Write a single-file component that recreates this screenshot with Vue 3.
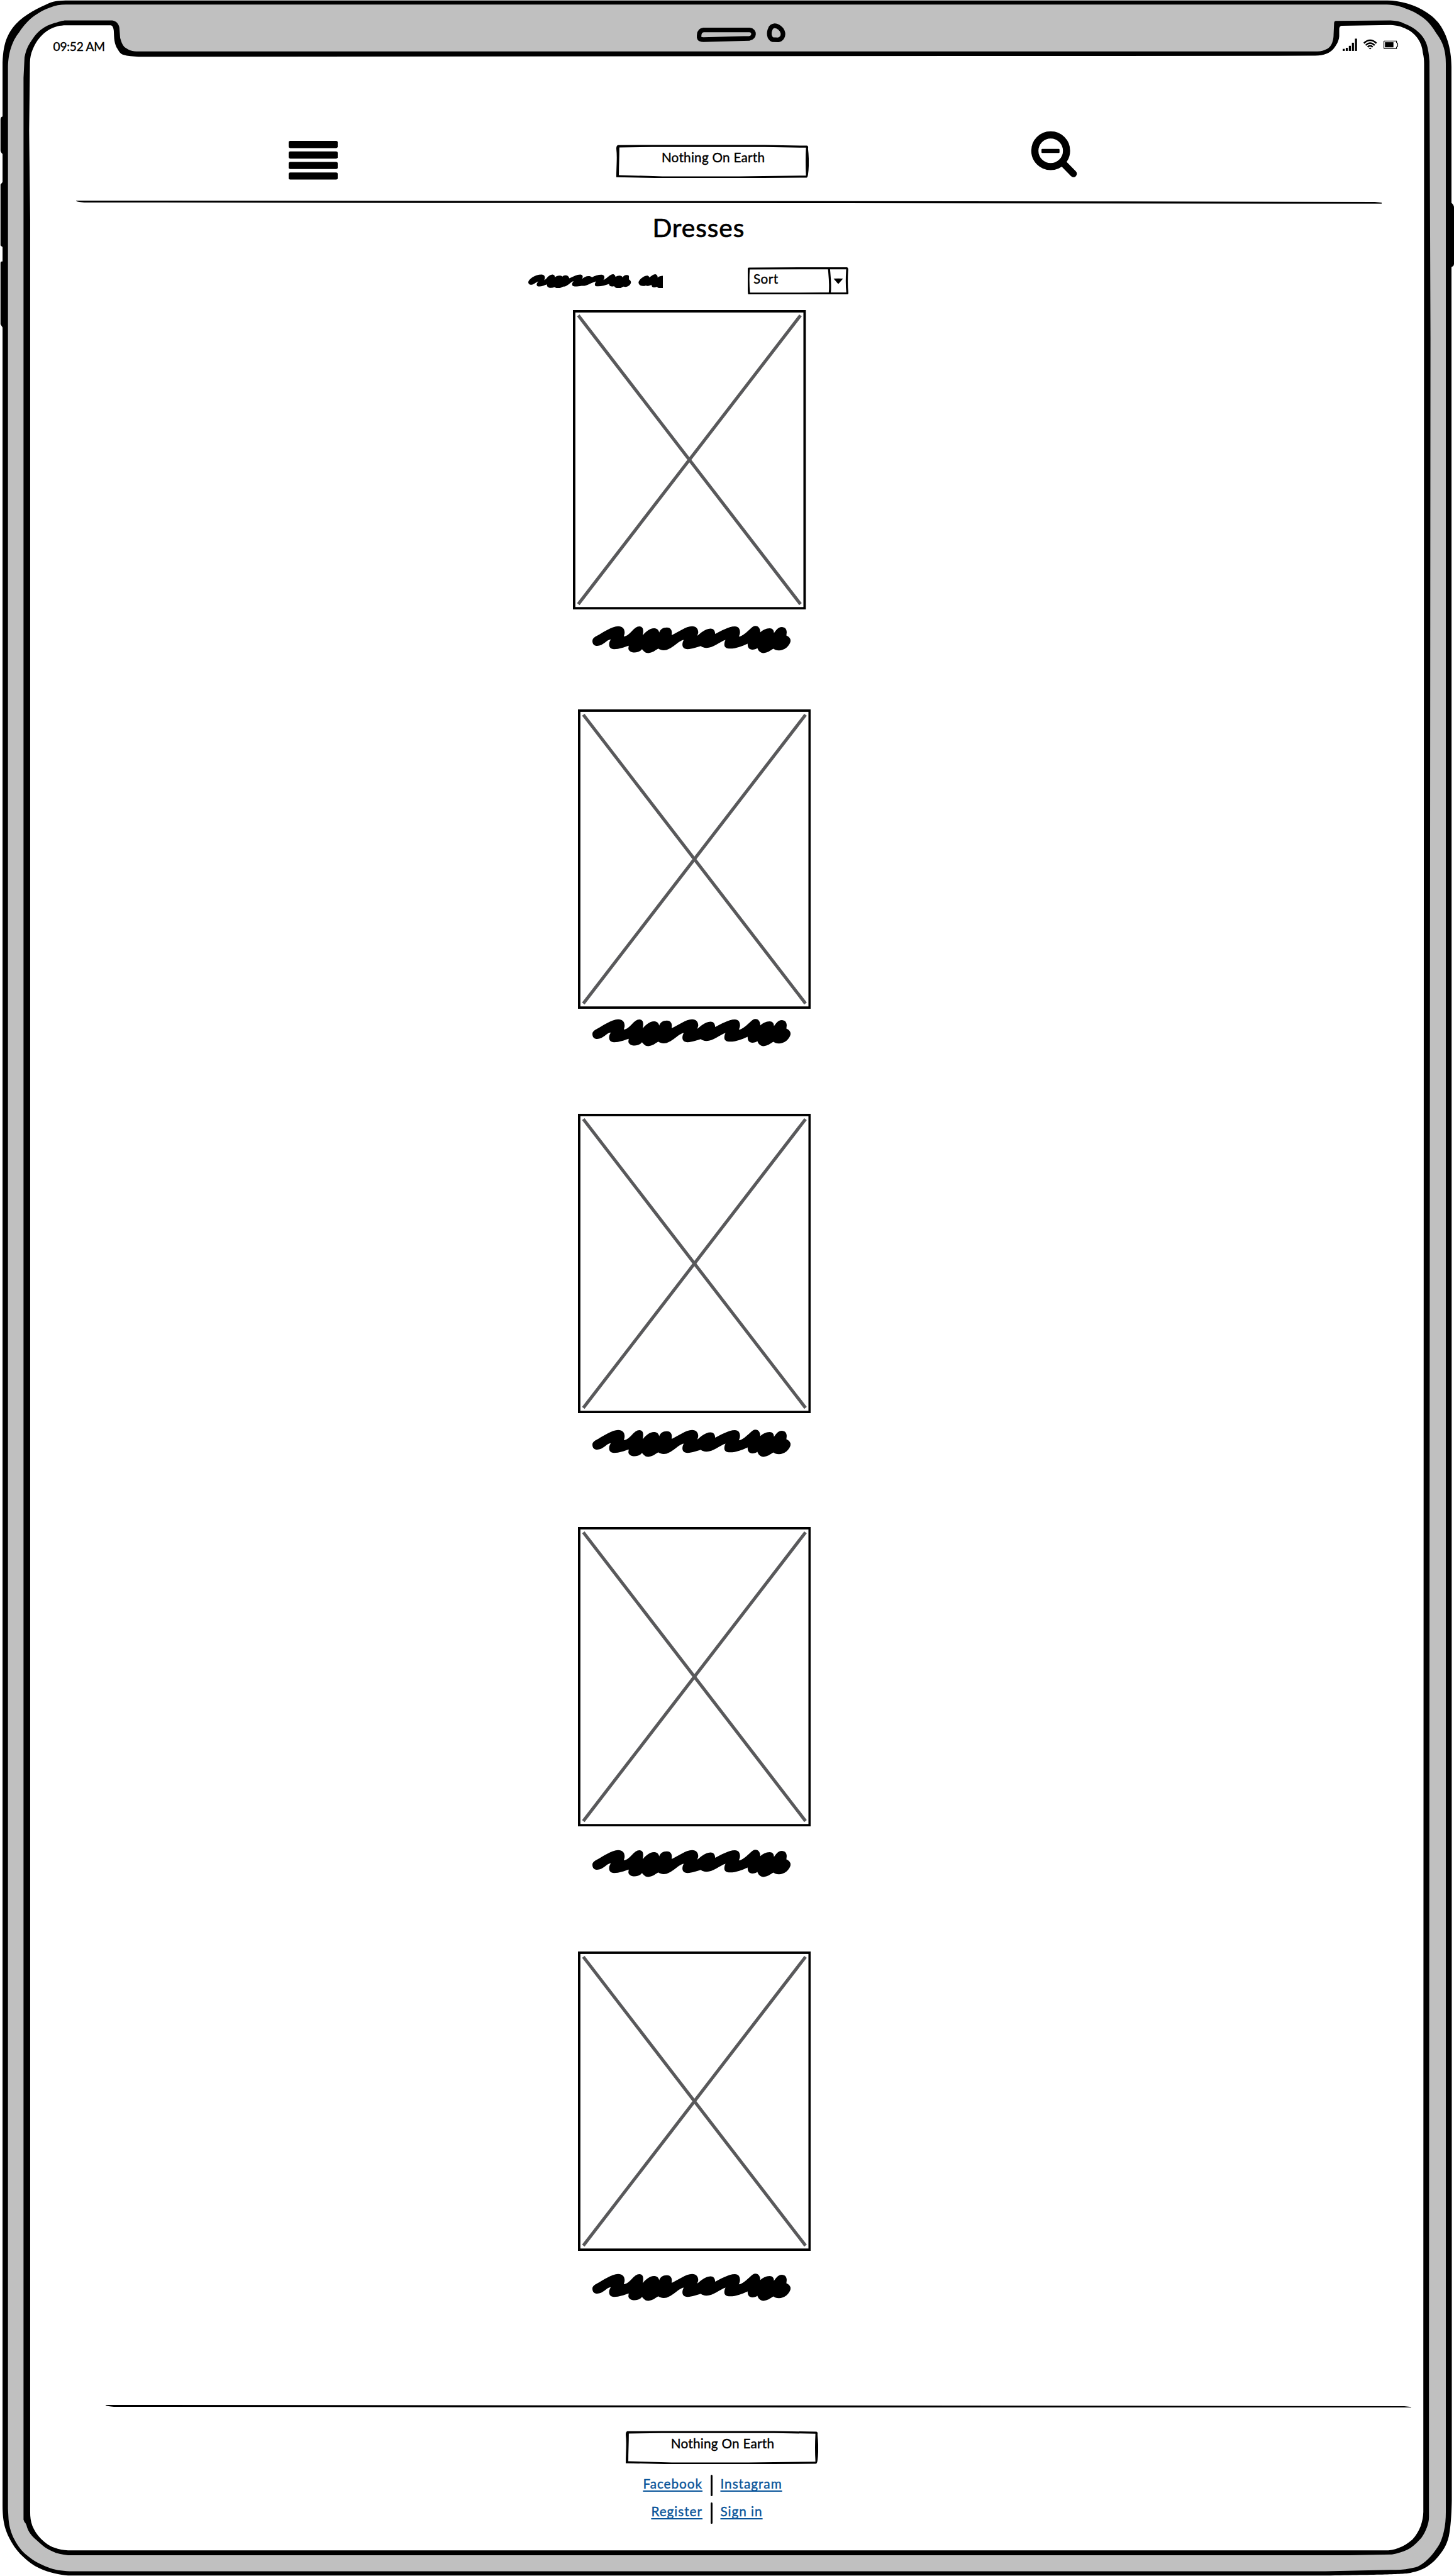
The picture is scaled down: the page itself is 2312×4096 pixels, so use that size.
<script setup>
const products = [1, 2, 3, 4, 5]
const linkRows = [
  ['Facebook', 'Instagram'],
  ['Register', 'Sign in'],
]
const signal = [4, 6, 10, 16, 24]
</script>

<template>
  <div class="device">
    <svg class="frame" viewBox="0 0 2844 5038" preserveAspectRatio="none" aria-hidden="true">
      <path d="M1 234Q1 228 6 228V302Q1 298 1 294ZM1 361L6 355V484L1 480ZM1 514Q1 511 6 511V642L1 634ZM2828 398L2838 396Q2844 400 2844 406V516Q2844 522 2836 523H2828Z" />
      <path d="M5 130C5 85 15 65 31 47C48 28 78 14 96 6C107 2 118 1 134 1H2714C2737 1 2768 9 2791 24.500C2801 31 2807 37 2813.600 44.600C2828 63 2839 93 2839 130L2839.700 4600V4890C2839 4925 2837 4945 2834 4960C2829 4982 2818 4995 2806 5008C2796 5017 2785 5027 2759 5031.700C2740 5035 2700 5035 2592 5037H133C117 5036 97 5032 76.700 5022.700C65 5017 55 5010 46.700 5001.700C37 4993 29 4983 23.300 4973C11 4952 5 4935 5 4900Z" />
      <path fill="#c0c0c0" d="M15.600 130C16 115 18 106 20 98C24 84 30 72 38 62.500C46 50 56 39 67 31C77 24 87 18 98 14.700C110 10 120 8.500 134 9H2706.500C2723 9 2735 11 2746.700 15.600C2760 20 2772 26 2782 33.500C2794 42 2802 53 2809 64.700C2815 73 2820 81 2822.600 89C2827 102 2828 112 2828 125V4913C2828 4927 2827 4939 2824.300 4950C2821 4964 2818 4973 2811 4983C2802 4997 2790 5010 2776 5018C2771 5020.500 2766 5022 2759.300 5023C2746 5026 2733 5026 2719 5026L2592 5028.700H136.700C120 5028 106 5026 93.300 5020.700C78 5015 65 5008 53.300 4998C43 4990 35 4980 28.300 4966.700C22 4955 18 4942 16.700 4926.700L15.600 4906.700Z" />
      <path d="M46 152L48 112C50 102 53 93 58 85C64 75 71 65 80 58C88 52 97 48 107 45C115 43 121 40 129.500 40H219.600C227 41 232 46 233.500 54L235 74C237 81 239 87 243 91.500C251 98 259 100.500 271 100.500H2577C2584 100.500 2590 99 2595 96C2601 93 2604 88 2606 82.600C2608 77 2608.500 72 2608.500 67L2609.500 44.600Q2610 41 2613 41L2720 40C2730 40.500 2739 42 2746.700 46C2755 49 2762 53 2769 58C2778 65 2785 73 2789 82.600C2793 92 2795 105 2796 120L2798 660L2795 4600V4923C2795 4931 2793 4937 2791 4943C2787 4953 2783 4961 2776 4968C2769 4976 2762 4982 2752.700 4986.700C2743 4991 2733 4994 2722.700 4996L2640 4997.300H133C121 4996 111 4994 103 4990C96 4987 89 4983 83 4978C76 4972 69 4966 63 4960C58 4954 55 4949 53 4943Q52 4938 50 4935Q47 4932 46 4928Z" />
      <path fill="#fff" d="M58.500 129.500C58.500 119 59 111 61.600 103C65 93 69 85 74 78C81 69 89 62 98 57C107 52 117 49.500 129.500 49.500H216.500C220 50 222 54 222.500 60C223 67 223 74 224 80C225 86 227 92 230 96C233 101 236 106 241 107C250 110 260 110 271 111L2572.600 109C2581 109 2588 108 2595 105C2603 102 2609 96 2613 89C2617 83 2619 77 2619.500 71V58C2619.500 53 2621 50.400 2625 50.400L2720 49C2732 50 2742 52 2751 57C2760 61 2768 68 2773.500 76C2779 84 2782 93 2783 103C2785 111 2785.500 118 2785.500 125L2784 4600V4913C2783.700 4923 2782 4931 2779 4940C2775 4950 2770 4959 2762.700 4966.700C2754 4974 2745 4980 2736 4983C2727 4987 2718 4988 2709 4988H133C124 4987.500 115 4986 106.700 4982.700C96 4979 88 4973 80 4965C72 4957 67 4949 63.300 4940C60 4931 59 4923 59 4913V430L57 255Z" />
      <g stroke="#000" stroke-width="9" stroke-linejoin="round" fill="none">
        <path d="M1376 60H1466C1477 61 1476 75 1466 76.500L1376 79C1367 79 1367 75 1367.500 70Q1368 61 1376 60Z" transform="translate(0 -1.500)" />
        <path d="M1514 51.500C1521 51 1530 57 1531.500 66C1532 73 1528 78 1522 79L1511 78.500C1504 75 1503 65 1507 57Q1509 52 1514 51.500Z" transform="translate(0 -1)" />
      </g>
    </svg>

    <div class="screen">
      <div class="status">
        <span class="clock">09:52 AM</span>
        <svg class="indicators" viewBox="2626 72 109 28" aria-hidden="true">
          <rect v-for="(h, i) in signal" :key="i" :x="2626 + i * 6" :y="99 - h" width="4" :height="h" />
          <g fill="none" stroke="#000" stroke-width="3">
            <path d="M2667.500 84Q2679.700 72.500 2692 84" />
            <path d="M2671 88Q2679.700 79.500 2688.500 88" />
            <path d="M2674.800 91.500Q2679.700 86.500 2684.700 91.500" />
          </g>
          <path d="M2677 93.600Q2679.700 91.800 2682.400 93.600L2679.700 96Z" />
          <path d="M2707.500 79.700H2731.300V82.500L2733.600 84.700V89.700L2731.300 91.800V94.300H2707.500Q2706.700 94.300 2706.700 93.500V80.500Q2706.700 79.700 2707.500 79.700Z" fill="none" stroke="#000" stroke-width="1.500" />
          <rect x="2708.700" y="82" width="16.600" height="10" />
        </svg>
      </div>

      <header class="header">
        <svg class="menu" viewBox="0 0 96 76" aria-label="Menu">
          <rect v-for="i in 4" :key="i" x="0" :y="(i - 1) * 20.600" width="96" height="14" rx="3" />
        </svg>
        <div class="logo">
          <svg class="sketch" viewBox="0 0 376 66" preserveAspectRatio="none" aria-hidden="true">
            <path fill-rule="evenodd" d="M3 1L70 .5H290L373 2Q376 2 375 8C377 26 377 44 375 59Q374 66 371 65L250 66H90L0 64C0 43 2 25 0 8Q0 2 3 1ZM6 5.500C6 25 5 42 5 60L90 62.500H240L371 61C370 42 370 25 371 6L290 4.500H70Z" />
          </svg>
          <span class="brand">Nothing On Earth</span>
        </div>
        <svg class="search" viewBox="2016 256 92 92" aria-label="Zoom out">
          <circle cx="2055" cy="295" r="31" fill="none" stroke="#000" stroke-width="14" />
          <path d="M2079 319L2099.500 340" stroke="#000" stroke-width="13.500" stroke-linecap="round" />
          <rect x="2037" y="291.300" width="35.300" height="8" rx="1.500" />
        </svg>
      </header>
      <svg class="rule" viewBox="0 0 2554 6" preserveAspectRatio="none" aria-hidden="true">
        <path d="M0 0L2000 1.500L2540 2.500L2554 4V6L1500 5L700 4.500L16 3.600Q4 3 0 1Z" />
      </svg>

      <h1 class="title">Dresses</h1>

      <div class="toolbar">
        <svg class="count" viewBox="73 108 590 84" preserveAspectRatio="none" aria-hidden="true">
          <path d="M73 155C74 140 100 110 132 110C145 112 149 125 143 143C152 140 160 112 179 110C190 112 190 122 189 127C196 116 214 112 223 122C228 113 248 109 253 132C270 122 285 110 302 110C313 113 314 124 308 137C318 122 340 112 352 126C365 118 380 110 396 111C409 115 409 130 402 142C418 135 428 108 446 108C454 112 454 118 455 124C464 114 484 112 486 127C492 114 505 108 514 118V138C520 142 523 150 523 155C521 175 505 185 494 182C488 178 485 184 478 189C465 193 455 190 449 178C436 183 427 178 427 165C405 175 385 183 368 178C362 170 365 160 370 150C350 155 330 180 306 176C290 180 275 182 268 177C262 168 266 158 272 148C255 155 245 184 225 181C215 190 200 196 188 184C170 194 153 188 155 168C140 175 125 184 113 178C107 172 110 160 117 150C105 155 95 172 83 170C76 168 73 162 73 155Z" />
          <path d="M556 155C558 140 580 114 596 116C602 119 603 123 603 127C612 120 620 108 630 108C637 110 640 118 640 128C645 120 655 117 663 117V190C650 194 642 190 636 182C622 190 612 184 613 170C605 176 595 180 588 174C575 182 556 176 556 155Z" />
        </svg>
        <div class="sort">
          <svg class="sketch" viewBox="0 0 196 54" preserveAspectRatio="none" aria-hidden="true">
            <g fill="none" stroke="#000" stroke-width="4" stroke-linejoin="round">
              <path d="M2 2.500L100 2L193 1.800Q194.500 2 194 6C193 22 193 38 194.500 51.500L100 52H2.500C1 36 1 18 2 2.500Z" />
              <path d="M158.500 2C160 20 162 36 160 52" />
            </g>
            <path d="M167.500 22.500Q177 21.500 186 22.500L177.500 32.300H176Z" />
          </svg>
          <span class="sort-label">Sort</span>
        </div>
      </div>

      <main class="products">
        <figure v-for="p in products" :key="p" class="product">
          <svg class="photo" viewBox="0 0 456 586" preserveAspectRatio="none" aria-hidden="true">
            <path d="M10.500 10.500L445.500 575.500M445.500 10.500L10.500 575.500" stroke="#59595b" stroke-width="6.300" />
            <rect x="2.400" y="2.400" width="451.200" height="581.200" fill="none" stroke="#000" stroke-width="4.800" />
          </svg>
          <svg class="name" viewBox="177 163 1163 160" preserveAspectRatio="none" aria-hidden="true">
            <path d="M177 252C177 238 188 230 205 221C240 203 290 166 328 166C352 166 366 180 366 202C366 212 363 219 361 226C380 224 395 208 408 195C424 178 438 167 452 167C468 167 475 178 475 194C475 204 473 212 472 220C488 200 512 178 538 178C555 178 566 188 569 203C573 186 590 173 614 173C632 173 643 185 643 203L642 218C680 202 725 166 762 166C785 166 798 181 798 202C797 210 794 217 791 222C808 212 835 180 870 180C887 180 897 192 897 211C930 196 975 167 1013 167C1033 167 1043 181 1043 201C1043 211 1039 219 1036 227C1062 222 1085 196 1103 181C1115 171 1122 164 1134 164C1152 164 1162 180 1162 202C1175 190 1195 178 1217 178C1233 178 1242 189 1242 205C1255 190 1265 170 1288 170C1306 170 1317 183 1317 201L1315 220C1330 226 1340 237 1340 252C1335 280 1305 308 1271 308C1257 308 1246 304 1239 298C1220 308 1205 323 1181 323C1163 323 1150 310 1145 294C1138 299 1128 303 1115 303C1097 303 1086 290 1088 268C1060 281 1020 297 985 297C963 297 951 290 951 273C951 262 954 253 958 246C925 256 885 293 846 293C832 293 820 288 813 282C790 288 763 300 735 300C714 300 705 289 705 273C705 262 709 253 713 246C680 250 640 307 596 307C582 307 570 302 563 297C545 308 528 323 505 323C488 323 478 312 468 300C458 312 443 320 424 320C402 320 388 309 388 296L390 280C365 288 335 300 304 300C284 300 275 289 275 272C275 260 280 251 285 243C262 243 240 281 205 281C188 281 177 270 177 252Z" />
          </svg>
        </figure>
      </main>

      <footer class="footer">
        <svg class="rule" viewBox="0 0 2554 6" preserveAspectRatio="none" aria-hidden="true">
          <path d="M0 0L2000 1.500L2540 2.500L2554 4V6L1500 5L700 4.500L16 3.600Q4 3 0 1Z" />
        </svg>
        <div class="logo">
          <svg class="sketch" viewBox="0 0 376 66" preserveAspectRatio="none" aria-hidden="true">
            <path fill-rule="evenodd" d="M3 1L70 .5H290L373 2Q376 2 375 8C377 26 377 44 375 59Q374 66 371 65L250 66H90L0 64C0 43 2 25 0 8Q0 2 3 1ZM6 5.500C6 25 5 42 5 60L90 62.500H240L371 61C370 42 370 25 371 6L290 4.500H70Z" />
          </svg>
          <span class="brand">Nothing On Earth</span>
        </div>
        <nav class="links">
          <div v-for="row in linkRows" :key="row[0]" class="link-row">
            <a class="link left">{{ row[0] }}</a>
            <i class="divider"></i>
            <a class="link right">{{ row[1] }}</a>
          </div>
        </nav>
      </footer>
    </div>
  </div>
</template>

<style>
html {
  font-size: 8.13px;
}
body {
  margin: 0;
  background: #fff;
}
</style>

<style scoped>
.device {
  position: relative;
  width: 2312px;
  height: 4096px;
  overflow: hidden;
  color: #000;
  font-family: Lato, "Open Sans", sans-serif;
  font-size: 2.55rem;
  line-height: 2.6rem;
  white-space: nowrap;
  -webkit-text-stroke: 0.05rem currentColor;
}
.frame {
  position: absolute;
  inset: 0;
  width: 100%;
  height: 100%;
}
svg {
  display: block;
  flex: none;
}
.screen {
  position: relative;
  display: flex;
  flex-direction: column;
  align-items: flex-start;
}
.status {
  box-sizing: border-box;
  width: 284.4rem;
  height: 12rem;
  padding: 7.2rem 10.9rem 0 10.4rem;
  display: flex;
  justify-content: space-between;
  align-items: flex-start;
}
.clock {
  margin-top: 0.65rem;
  font-size: 2.36rem;
  line-height: 2.4rem;
  letter-spacing: -0.03rem;
}
.indicators {
  width: 10.9rem;
  height: 2.8rem;
}
.header {
  display: flex;
  align-items: flex-start;
  height: 27.3rem;
  padding-left: 56.4rem;
}
.menu {
  width: 9.6rem;
  height: 7.6rem;
  margin-top: 15.53rem;
}
.logo {
  position: relative;
  box-sizing: border-box;
  width: 37.6rem;
  height: 6.55rem;
  padding-top: 1.25rem;
  text-align: center;
  letter-spacing: 0.03rem;
}
.header .logo {
  margin: 16.24rem 0 0 54.6rem;
}
.sketch {
  position: absolute;
  inset: 0;
  width: 100%;
  height: 100%;
}
.brand,
.sort-label {
  position: relative;
  display: block;
}
.brand {
  padding-left: 0.2rem;
}
.search {
  width: 9.2rem;
  height: 9.2rem;
  margin: 13.6rem 0 0 43.4rem;
}
.rule {
  width: 255.4rem;
  height: 0.6rem;
  margin-left: 14.87rem;
}
.title {
  margin: 2.2rem 0 0 127.6rem;
  font-size: 5rem;
  line-height: 5rem;
  font-weight: 400;
  letter-spacing: 0.12rem;
  -webkit-text-stroke: 0.09rem currentColor;
}
.toolbar {
  display: flex;
  align-items: flex-start;
  margin: 5.13rem 0 0 103.26rem;
}
.count {
  width: 26.34rem;
  height: 2.8rem;
  margin-top: 1.37rem;
}
.sort {
  position: relative;
  box-sizing: border-box;
  width: 19.64rem;
  height: 5.34rem;
  margin-left: 16.7rem;
  padding: 1.05rem 0 0 1.05rem;
  letter-spacing: 0.06rem;
}
.products {
  margin-left: 113.03rem;
}
.product {
  margin: 0;
}
.photo {
  width: 45.56rem;
  height: 58.57rem;
}
.name {
  width: 38.77rem;
  height: 5.34rem;
  margin-left: 2.87rem;
}
.product:nth-child(1) { margin-top: 3.03rem; }
.product:nth-child(1) .photo { margin-left: -0.96rem; }
.product:nth-child(1) .name { margin-top: 3.24rem; }
.product:nth-child(2) { margin-top: 11.03rem; }
.product:nth-child(2) .name { margin-top: 1.96rem; }
.product:nth-child(3) { margin-top: 13.17rem; }
.product:nth-child(3) .name { margin-top: 3.24rem; }
.product:nth-child(4) { margin-top: 13.66rem; }
.product:nth-child(4) .name { margin-top: 4.6rem; }
.product:nth-child(5) { margin-top: 14.5rem; }
.product:nth-child(5) .name { margin-top: 4.5rem; }
.footer {
  margin-top: 20.27rem;
}
.footer .rule {
  margin-left: 20.63rem;
}
.footer .logo {
  margin: 4.53rem 0 0 122.44rem;
}
.links {
  display: flex;
  flex-direction: column;
  gap: 1.2rem;
  margin: 2.07rem 0 0 120rem;
}
.link-row {
  display: flex;
  align-items: flex-start;
  height: 4.2rem;
}
.link {
  padding-top: 0.5rem;
  color: #08549a;
  letter-spacing: 0.12rem;
  text-decoration: underline;
  text-decoration-thickness: 0.2rem;
  text-underline-offset: 0.35rem;
  text-decoration-skip-ink: none;
}
.left {
  width: 17.4rem;
  text-align: right;
}
.divider {
  width: 0.4rem;
  height: 4.2rem;
  margin: 0 1.5rem 0 1.6rem;
  border-radius: 0.2rem;
  background: #000;
}
</style>
